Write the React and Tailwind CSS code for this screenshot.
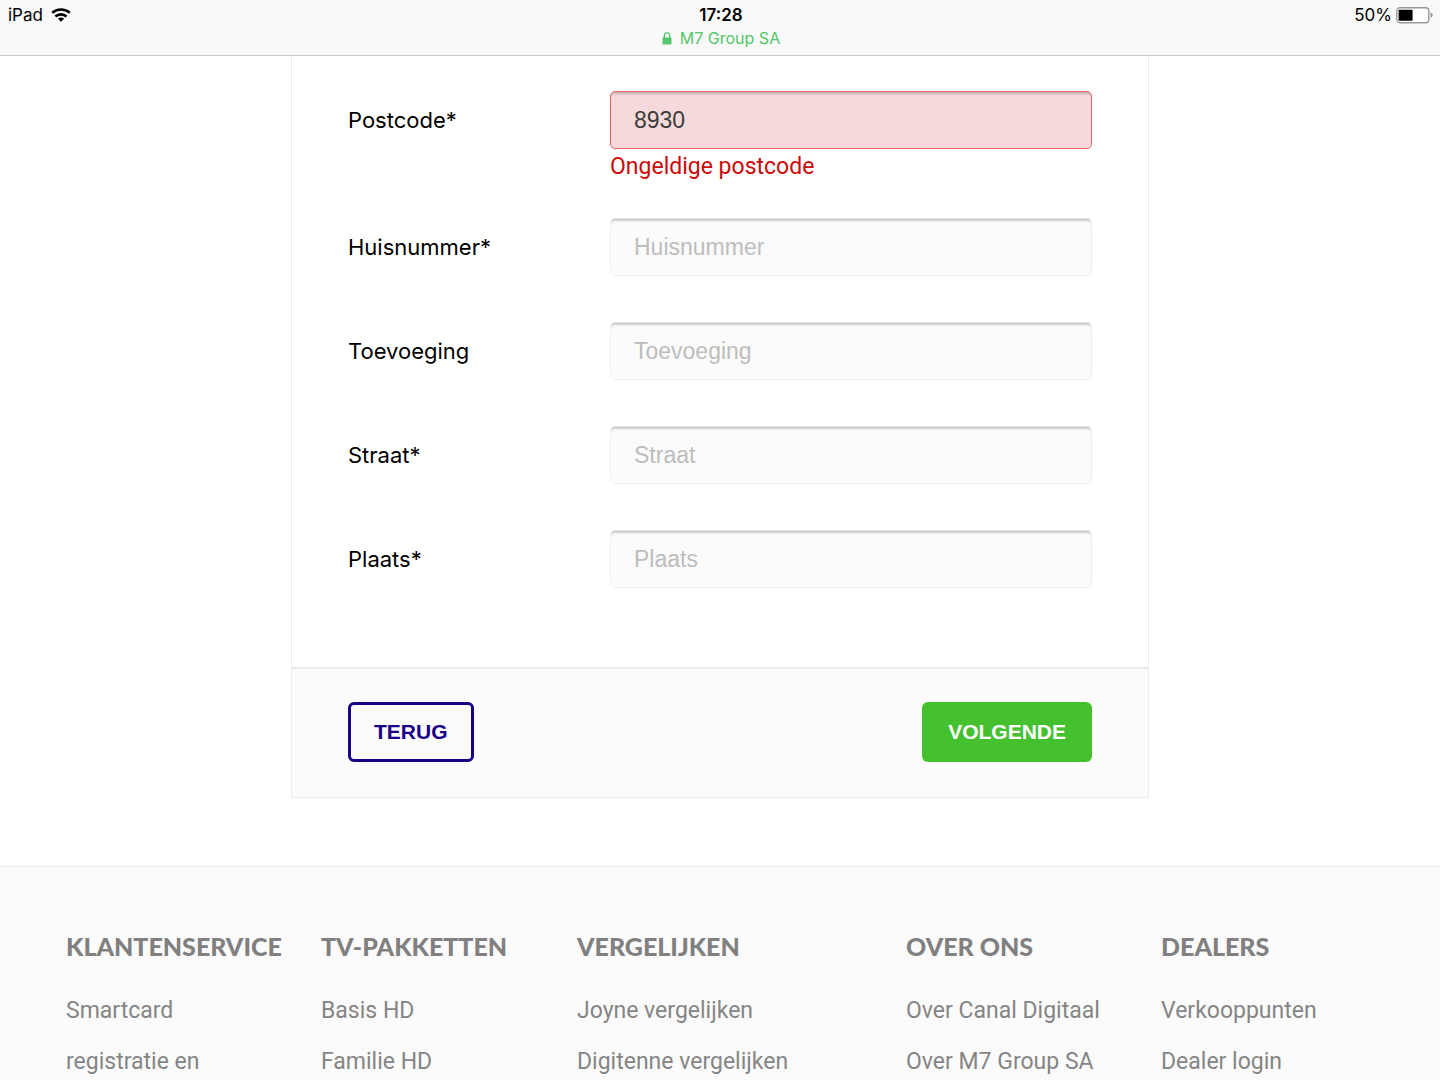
import React, { useState } from 'react';

const FIELDS = [
  { id: 'postcode', label: 'Postcode', required: true, error: 'Ongeldige postcode' },
  { id: 'huisnummer', label: 'Huisnummer', required: true },
  { id: 'toevoeging', label: 'Toevoeging' },
  { id: 'straat', label: 'Straat', required: true },
  { id: 'plaats', label: 'Plaats', required: true },
];

const FOOTER = [
  { title: 'Klantenservice', links: ['Smartcard registratie en'] },
  { title: 'TV-pakketten', links: ['Basis HD', 'Familie HD'] },
  { title: 'Vergelijken', links: ['Joyne vergelijken', 'Digitenne vergelijken'] },
  { title: 'Over ons', links: ['Over Canal Digitaal', 'Over M7 Group SA'] },
  { title: 'Dealers', links: ['Verkooppunten', 'Dealer login'] },
];

function WifiIcon() {
  return (
    <svg width="20" height="15" viewBox="0 0 20 15" fill="none" stroke="#000" strokeWidth="2.6" aria-hidden="true">
      <path d="M1.2 4.9C6.1 .4 13.900 .4 18.800 4.900" />
      <path d="M4.4 8.500C7.500 5.600 12.500 5.600 15.600 8.500" />
      <path d="M10 13.700L6.900 10.700C8.600 9.200 11.400 9.200 13.100 10.700Z" fill="#000" stroke="none" />
    </svg>
  );
}

function LockIcon() {
  return (
    <svg width="10" height="13" viewBox="0 0 10 13" aria-hidden="true">
      <path d="M2.3 6V3.6a2.7 2.7 0 0 1 5.4 0V6" fill="none" stroke="#55c66b" strokeWidth="1.3" />
      <rect x="0.5" y="5.6" width="9" height="7" rx="1" fill="#55c66b" />
    </svg>
  );
}

function BatteryIcon() {
  return (
    <svg width="38" height="17" viewBox="0 0 38 17" aria-hidden="true">
      <rect x="0.8" y="0.8" width="32" height="15" rx="3.2" fill="#fff" stroke="#999" strokeWidth="1.4" />
      <rect x="2.600" y="2.800" width="14" height="11" rx="0.6" fill="#000" />
      <path d="M34.500 5.500c1.500.500 2.100 1.500 2.100 2.700s-.6 2.200-2.100 2.700z" fill="#999" />
    </svg>
  );
}

function StatusBar() {
  return (
    <header className="grid grid-cols-3 items-start h-14 border-b border-[#c8c8c8] bg-[#f9f9f9] pl-2 pr-1.5 pt-1 text-[17px] leading-[22px] shrink-0">
      <div className="flex items-center gap-2">
        <span>iPad</span>
        <WifiIcon />
      </div>
      <div className="flex flex-col items-center">
        <span className="font-semibold">17:28</span>
        <span className="flex items-center gap-2 text-[#55c66b] text-[16px] leading-6">
          <LockIcon />
          M7 Group SA
        </span>
      </div>
      <div className="flex items-center justify-end gap-1">
        <span>50%</span>
        <BatteryIcon />
      </div>
    </header>
  );
}

function Field({ field, value, onChange }) {
  const { id, label, required, error } = field;
  return (
    <div className={error ? 'flex items-start mb-[39px]' : 'flex items-start mb-[46px]'}>
      <label htmlFor={id} className="w-[262px] shrink-0 text-[22px] leading-[58px]">
        {label}{required && '*'}
      </label>
      <div className="flex-1 min-w-0">
        <input
          id={id}
          type="text"
          placeholder={label}
          value={value}
          onChange={(e) => onChange(id, e.target.value)}
          aria-invalid={Boolean(error)}
          className={
            error
              ? "block w-full h-[58px] px-[23px] rounded-[5px] border border-[#e06464] bg-[#f6d9da] text-[#3c3c3c] text-[23px] font-['Liberation_Sans',sans-serif] shadow-[inset_0_4px_2px_-2px_rgba(0,0,0,0.18)] outline-none"
              : "block w-full h-[58px] px-[23px] rounded-[5px] border border-[#eee] border-t-[#ddd] bg-[#fbfbfb] text-[#3c3c3c] text-[23px] font-['Liberation_Sans',sans-serif] placeholder:text-[#bdbdbd] shadow-[inset_0_4px_2px_-2px_rgba(0,0,0,0.18)] outline-none"
          }
        />
        {error && <p className="mt-1.5 text-[23px] leading-6 text-[#cc0a0a] font-['Roboto',sans-serif]">{error}</p>}
      </div>
    </div>
  );
}

export default function App() {
  const [values, setValues] = useState({ postcode: '8930', huisnummer: '', toevoeging: '', straat: '', plaats: '' });

  const handleChange = (id, value) => setValues(v => ({ ...v, [id]: value }));

  return (
    <div className="flex flex-col h-screen overflow-hidden bg-white text-black font-['Inter',sans-serif]">
      <StatusBar />

      <main className="shrink-0 pb-[68px]">
        <form className="w-full max-w-[858px] mx-auto border-x border-b border-[#ebebeb]" onSubmit={(e) => e.preventDefault()}>
          <div className="px-14 pt-[35px] pb-[33px]">
            {FIELDS.map(field => (
              <Field key={field.id} field={field} value={values[field.id]} onChange={handleChange} />
            ))}
          </div>

          {/* Form actions */}
          <div className="flex justify-between items-center border-t-2 border-[#ebebeb] bg-[#fbfbfb] px-14 pt-[33px] pb-[35px] font-['Liberation_Sans',sans-serif]">
            <button type="button" className="h-[60px] px-[23px] rounded-[6px] border-3 border-[#1a0087] text-[#1a0087] text-[21px] font-bold uppercase">
              Terug
            </button>
            <button type="submit" className="h-[60px] px-[26px] rounded-[6px] bg-[#45c02f] text-white text-[21px] font-bold uppercase">
              Volgende
            </button>
          </div>
        </form>
      </main>

      <footer className="flex-1 border-t border-[#ebebeb] bg-[#fbfbfb] px-[66px] pt-[63px]">
        <div className="grid grid-cols-[255fr_256fr_329fr_255fr_213fr]">
          {FOOTER.map(col => (
            <section key={col.title}>
              <h3 className="text-[25px] leading-8 font-black uppercase text-[#808080] whitespace-nowrap font-['Lato',sans-serif]">
                {col.title}
              </h3>
              <ul className="mt-[23px] pr-10 text-[23px] leading-[51px] text-[#858585] font-['Roboto',sans-serif]">
                {col.links.map(link => (
                  <li key={link}>
                    <a href="#" className="block">{link}</a>
                  </li>
                ))}
              </ul>
            </section>
          ))}
        </div>
      </footer>
    </div>
  );
}
